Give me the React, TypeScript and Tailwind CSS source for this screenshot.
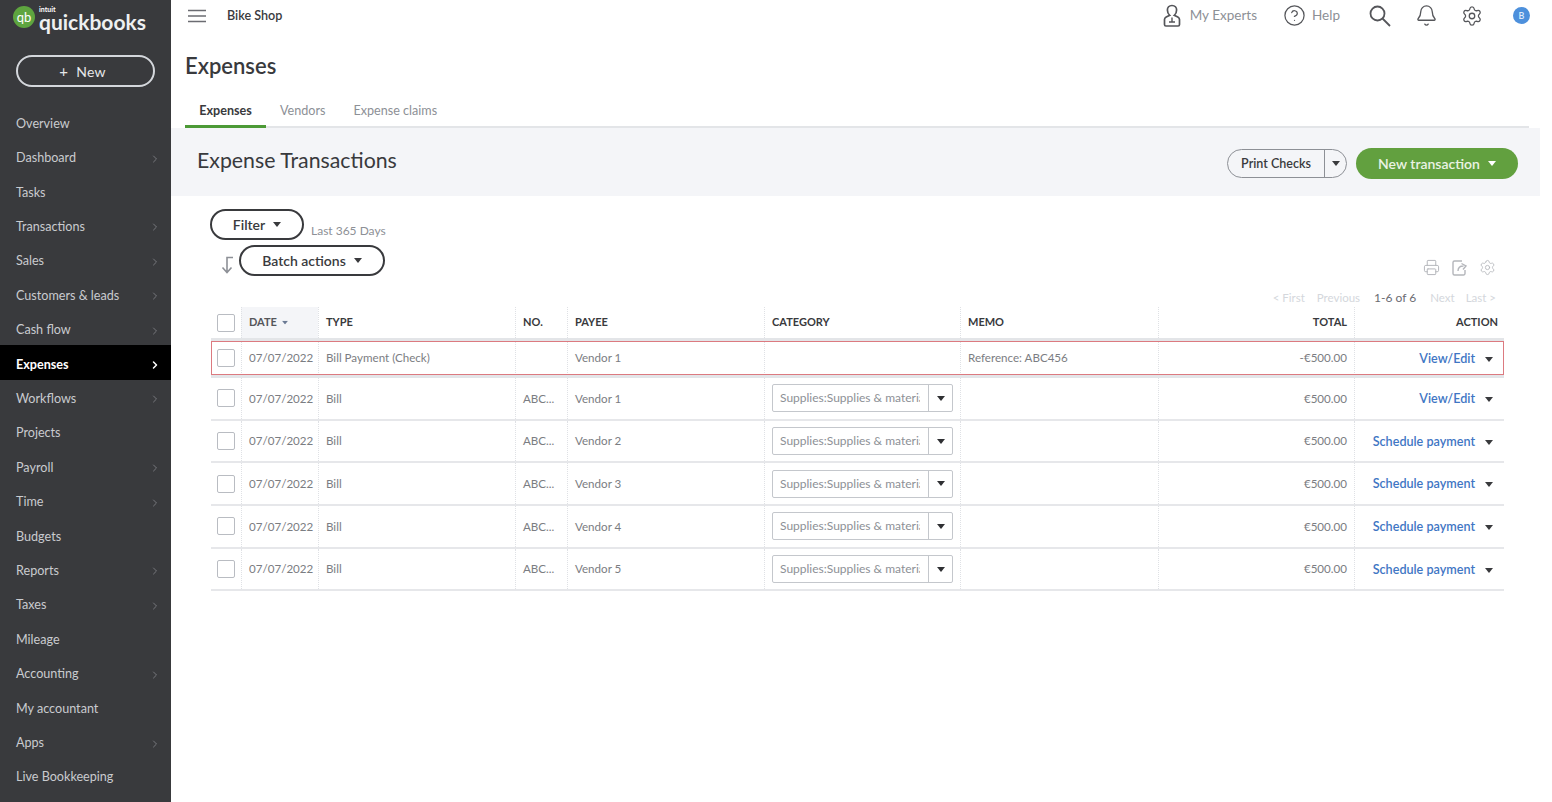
import { Bell, ChevronRight, CircleHelp, Printer, Settings } from "lucide-react";

const navItems = [
  { label: "Overview" },
  { label: "Dashboard", arrow: true },
  { label: "Tasks" },
  { label: "Transactions", arrow: true },
  { label: "Sales", arrow: true },
  { label: "Customers & leads", arrow: true },
  { label: "Cash flow", arrow: true },
  { label: "Expenses", arrow: true, active: true },
  { label: "Workflows", arrow: true },
  { label: "Projects" },
  { label: "Payroll", arrow: true },
  { label: "Time", arrow: true },
  { label: "Budgets" },
  { label: "Reports", arrow: true },
  { label: "Taxes", arrow: true },
  { label: "Mileage" },
  { label: "Accounting", arrow: true },
  { label: "My accountant" },
  { label: "Apps", arrow: true },
  { label: "Live Bookkeeping" },
];

const rows = [
  { type: "Bill", no: "ABC...", payee: "Vendor 1", action: "View/Edit" },
  { type: "Bill", no: "ABC...", payee: "Vendor 2", action: "Schedule payment" },
  { type: "Bill", no: "ABC...", payee: "Vendor 3", action: "Schedule payment" },
  { type: "Bill", no: "ABC...", payee: "Vendor 4", action: "Schedule payment" },
  { type: "Bill", no: "ABC...", payee: "Vendor 5", action: "Schedule payment" },
];

const gridCols = "grid grid-cols-[30px_77px_197px_52px_197px_196px_198px_196px_150px]";
const cell = "flex items-center border-l border-dotted border-[#dfe1e5] px-[7px] min-w-0";

function Caret({ className = "text-[#393a3d]" }: { className?: string }) {
  return (
    <svg width="8" height="5" viewBox="0 0 8 5" className={className}>
      <path d="M0 0h8L4 5z" fill="currentColor" />
    </svg>
  );
}

function Checkbox() {
  return <div className="h-[18px] w-[18px] rounded-[2px] border border-[#b9bcc2] bg-white" />;
}

function Sidebar() {
  return (
    <aside className="flex h-[802px] w-[171px] shrink-0 flex-col bg-[#393a3d] text-[#c9cbcf]">
      <div className="flex h-[37px] items-start pl-[13px] pt-[6px]">
        <div className="flex h-[22px] w-[22px] items-center justify-center rounded-full bg-[#5ea53f] text-[13px] leading-none text-white">
          qb
        </div>
        <div className="ml-[4px] flex flex-col">
          <span className="h-[6px] text-[7px] font-bold leading-[6px] text-white">intuit</span>
          <span className="text-[21px] font-bold leading-[19px] text-[#eef0f1]">quickbooks</span>
        </div>
      </div>
      <div className="px-[16px] pt-[18px]">
        <button className="flex h-[32px] w-[139px] items-center justify-center gap-[8px] rounded-full border-2 border-[#d4d7dc] pr-[6px] text-[14px] tracking-[0.2px] text-[#e6e7e9]">
          <span className="text-[15px] leading-none">+</span>
          <span>New</span>
        </button>
      </div>
      <nav className="flex flex-col pt-[17.5px]">
        {navItems.map((item) => (
          <div
            key={item.label}
            className={`flex h-[34.42px] shrink-0 items-center justify-between pl-[16px] pr-[10px] pt-[5px] text-[12.6px] ${
              item.active ? "bg-black font-bold text-white" : ""
            }`}
          >
            <span>{item.label}</span>
            {item.arrow && (
              <ChevronRight
                size={12}
                strokeWidth={item.active ? 3 : 2}
                className={item.active ? "text-white" : "text-[#77787d]"}
              />
            )}
          </div>
        ))}
      </nav>
    </aside>
  );
}

function TopBar() {
  return (
    <header className="flex h-[31px] items-center pl-[17px] pr-[10px] text-[#6b6c72]">
      <svg width="18" height="14" viewBox="0 0 18 14" className="text-[#6b6c72]">
        <path d="M0 1.5h18M0 7h18M0 12.5h18" stroke="currentColor" strokeWidth="1.6" />
      </svg>
      <span className="ml-[21px] pt-[2px] text-[12.6px] font-semibold text-[#393a3d]">Bike Shop</span>
      <div className="ml-auto flex items-center">
        <svg width="18" height="24" viewBox="0 0 18 24" fill="none" stroke="#55565a" strokeWidth="1.7">
          <path d="M9 1.500c-3 0-4.600 2-4.600 4.600 0 2.200 1 4.200 2.300 5.200L3.200 13c-1.200.7-1.700 1.500-1.700 2.600v5c0 .8.6 1.400 1.400 1.400h12.200c.8 0 1.400-.6 1.400-1.400v-5c0-1.100-.5-1.900-1.700-2.600l-3.500-1.700c1.300-1 2.300-3 2.300-5.200 0-2.600-1.600-4.600-4.600-4.600z" />
          <path d="M9 13.500v4M6 18h6" strokeWidth="1.4" />
        </svg>
        <span className="ml-[9px] text-[13.5px] text-[#8d9096]">My Experts</span>
        <CircleHelp size={23} strokeWidth={1.3} className="ml-[26px] text-[#55565a]" />
        <span className="ml-[6px] text-[13.5px] text-[#8d9096]">Help</span>
        <svg width="22" height="22" viewBox="0 0 22 22" fill="none" stroke="#55565a" strokeWidth="1.8" className="ml-[29px]">
          <circle cx="8.500" cy="8.500" r="7" />
          <path d="M13.500 13.500L21 21" />
        </svg>
        <Bell size={23} strokeWidth={1.4} className="ml-[24px] text-[#55565a]" />
        <Settings size={22} strokeWidth={1.4} className="ml-[23px] text-[#55565a]" />
        <div className="ml-[30px] flex h-[17px] w-[17px] items-center justify-center rounded-full bg-[#4d90dc] text-[9px] font-semibold text-[#dfeafa]">
          B
        </div>
      </div>
    </header>
  );
}

function ActionCell({ label }: { label: string }) {
  return (
    <div className={`${cell} justify-end gap-[10px] pr-[11px] pt-[2px]`}>
      <span className="text-[12.6px] font-semibold text-[#3f76c4]">{label}</span>
      <Caret />
    </div>
  );
}

function CategorySelect() {
  return (
    <div className="flex h-[28px] w-[182px] items-center rounded-[2px] border border-[#c4c7cc] bg-white">
      <div className="w-[155px] pl-[7px] pr-[8px]">
        <div className="overflow-hidden whitespace-nowrap text-[12px] text-[#8d9096]">Supplies:Supplies &amp; materials</div>
      </div>
      <div className="flex h-full flex-1 items-center justify-center border-l border-[#c4c7cc]">
        <Caret className="text-[#2f3033]" />
      </div>
    </div>
  );
}

function TransactionsTable() {
  const head = "text-[11px] font-bold text-[#393a3d]";
  const body = "text-[11.6px] text-[#7b7d82]";
  return (
    <div className="mx-[40px] w-[1293px]">
      <div className={`${gridCols} h-[34px] border-b-[3px] border-[#e3e5e8]`}>
        <div className="flex items-center pl-[6px]">
          <Checkbox />
        </div>
        <div className={`${cell} gap-[4px] bg-[#f4f5f8] ${head} text-[#55565a]`}>
          DATE
          <Caret className="scale-75 text-[#6b7a94]" />
        </div>
        <div className={`${cell} ${head}`}>TYPE</div>
        <div className={`${cell} ${head}`}>NO.</div>
        <div className={`${cell} ${head}`}>PAYEE</div>
        <div className={`${cell} ${head}`}>CATEGORY</div>
        <div className={`${cell} ${head}`}>MEMO</div>
        <div className={`${cell} justify-end ${head}`}>TOTAL</div>
        <div className={`${cell} justify-end pr-[6px] ${head}`}>ACTION</div>
      </div>

      <div className="border-b-[3px] border-[#e3e5e8]">
        <div className={`${gridCols} h-[34px] outline outline-1 -outline-offset-1 outline-[#dc7a80]`}>
          <div className="flex items-center pl-[6px]">
            <Checkbox />
          </div>
          <div className={`${cell} ${body}`}>07/07/2022</div>
          <div className={`${cell} ${body}`}>Bill Payment (Check)</div>
          <div className={`${cell} ${body}`} />
          <div className={`${cell} ${body}`}>Vendor 1</div>
          <div className={`${cell} ${body}`} />
          <div className={`${cell} ${body}`}>Reference: ABC456</div>
          <div className={`${cell} justify-end ${body}`}>-€500.00</div>
          <ActionCell label="View/Edit" />
        </div>
      </div>

      {rows.map((row) => (
        <div key={row.payee} className={`${gridCols} h-[42.7px] border-b-2 border-[#e6e7ea]`}>
          <div className="flex items-center pl-[6px]">
            <Checkbox />
          </div>
          <div className={`${cell} ${body}`}>07/07/2022</div>
          <div className={`${cell} ${body}`}>{row.type}</div>
          <div className={`${cell} ${body}`}>{row.no}</div>
          <div className={`${cell} ${body}`}>{row.payee}</div>
          <div className={cell}>
            <CategorySelect />
          </div>
          <div className={`${cell} ${body}`} />
          <div className={`${cell} justify-end ${body}`}>€500.00</div>
          <ActionCell label={row.action} />
        </div>
      ))}
    </div>
  );
}

export default function App() {
  return (
    <div className="flex h-[802px] w-[1552px] overflow-hidden bg-white font-['Lato','Noto_Sans',sans-serif]">
      <Sidebar />
      <main className="flex w-[1369px] flex-col">
        <TopBar />
        <h1 className="pl-[14px] pt-[20px] text-[22px] font-semibold leading-[30px] text-[#393a3d]">Expenses</h1>
        <div className="ml-[14px] mr-[11px] mt-[15px] flex h-[32px] border-b-2 border-[#e3e5e8] text-[12.6px]">
          <div className="-mb-[2px] flex w-[81px] items-center justify-center border-b-[3px] border-[#4c9a36] pt-[1px] font-bold text-[#393a3d]">
            Expenses
          </div>
          <div className="ml-[14px] flex items-center text-[#8d9096]">Vendors</div>
          <div className="ml-[28px] flex items-center text-[#8d9096]">Expense claims</div>
        </div>

        <section className="flex h-[68px] items-center justify-between bg-[#f4f5f8] pl-[26px] pr-[22px]">
          <h2 className="pb-[2px] text-[21.3px] text-[#393a3d]">Expense Transactions</h2>
          <div className="flex items-center gap-[9px] pt-[3px]">
            <div className="flex h-[29px] w-[120px] items-center rounded-full border border-[#8d9096] text-[12.5px] font-semibold text-[#393a3d]">
              <span className="w-[96px] pt-[2px] text-center">Print Checks</span>
              <div className="flex h-full flex-1 items-center justify-center border-l border-[#8d9096]">
                <Caret />
              </div>
            </div>
            <button className="flex h-[31px] w-[162px] items-center justify-center gap-[8px] rounded-full bg-[#62a03f] text-[14px] font-semibold text-[#eaf3e4]">
              New transaction
              <Caret className="text-white" />
            </button>
          </div>
        </section>

        <div className="flex items-end pl-[39px] pt-[13px]">
          <button className="flex h-[31px] w-[94px] items-center justify-center gap-[8px] rounded-full border-2 border-[#393a3d] text-[14px] font-semibold text-[#393a3d]">
            Filter
            <Caret />
          </button>
          <span className="ml-[7px] text-[12px] text-[#8d9096]">Last 365 Days</span>
        </div>
        <div className="flex items-center pl-[49px] pr-[44px] pt-[5px]">
          <svg width="14" height="18" viewBox="0 0 14 18" fill="none" stroke="#8d9096" strokeWidth="1.6" className="mt-[8px]">
            <path d="M13 1.500H7v15M2.500 11.500L7 16.500l4.500-5" />
          </svg>
          <button className="ml-[5px] flex h-[31px] w-[146px] items-center justify-center gap-[8px] rounded-full border-2 border-[#393a3d] text-[14px] font-semibold text-[#393a3d]">
            Batch actions
            <Caret />
          </button>
          <div className="ml-auto flex items-center gap-[11px] pt-[14px]">
            <Printer size={17} strokeWidth={1.4} className="text-[#b4b6bb]" />
            <svg width="17" height="17" viewBox="0 0 17 17" fill="none" stroke="#b4b6bb" strokeWidth="1.4">
              <path d="M14 11v3.500a1.500 1.500 0 0 1-1.500 1.500h-9A1.500 1.500 0 0 1 2 14.500v-11A1.500 1.500 0 0 1 3.500 2H11" />
              <path d="M7 12c0-3 2-5 5.500-5M10.500 4.500L15 7l-3 3.500" />
            </svg>
            <Settings size={17} strokeWidth={1.2} className="text-[#b4b6bb]" />
          </div>
        </div>
        <div className="mt-[12px] flex h-[19px] items-center justify-end pr-[44px] text-[11.5px] text-[#d4d7dc]">
          <span>&lt; First</span>
          <span className="ml-[12px]">Previous</span>
          <span className="ml-[14px] text-[12px] text-[#6b6c72]">1-6 of 6</span>
          <span className="ml-[14px]">Next</span>
          <span className="ml-[11px]">Last &gt;</span>
        </div>

        <TransactionsTable />
      </main>
    </div>
  );
}
